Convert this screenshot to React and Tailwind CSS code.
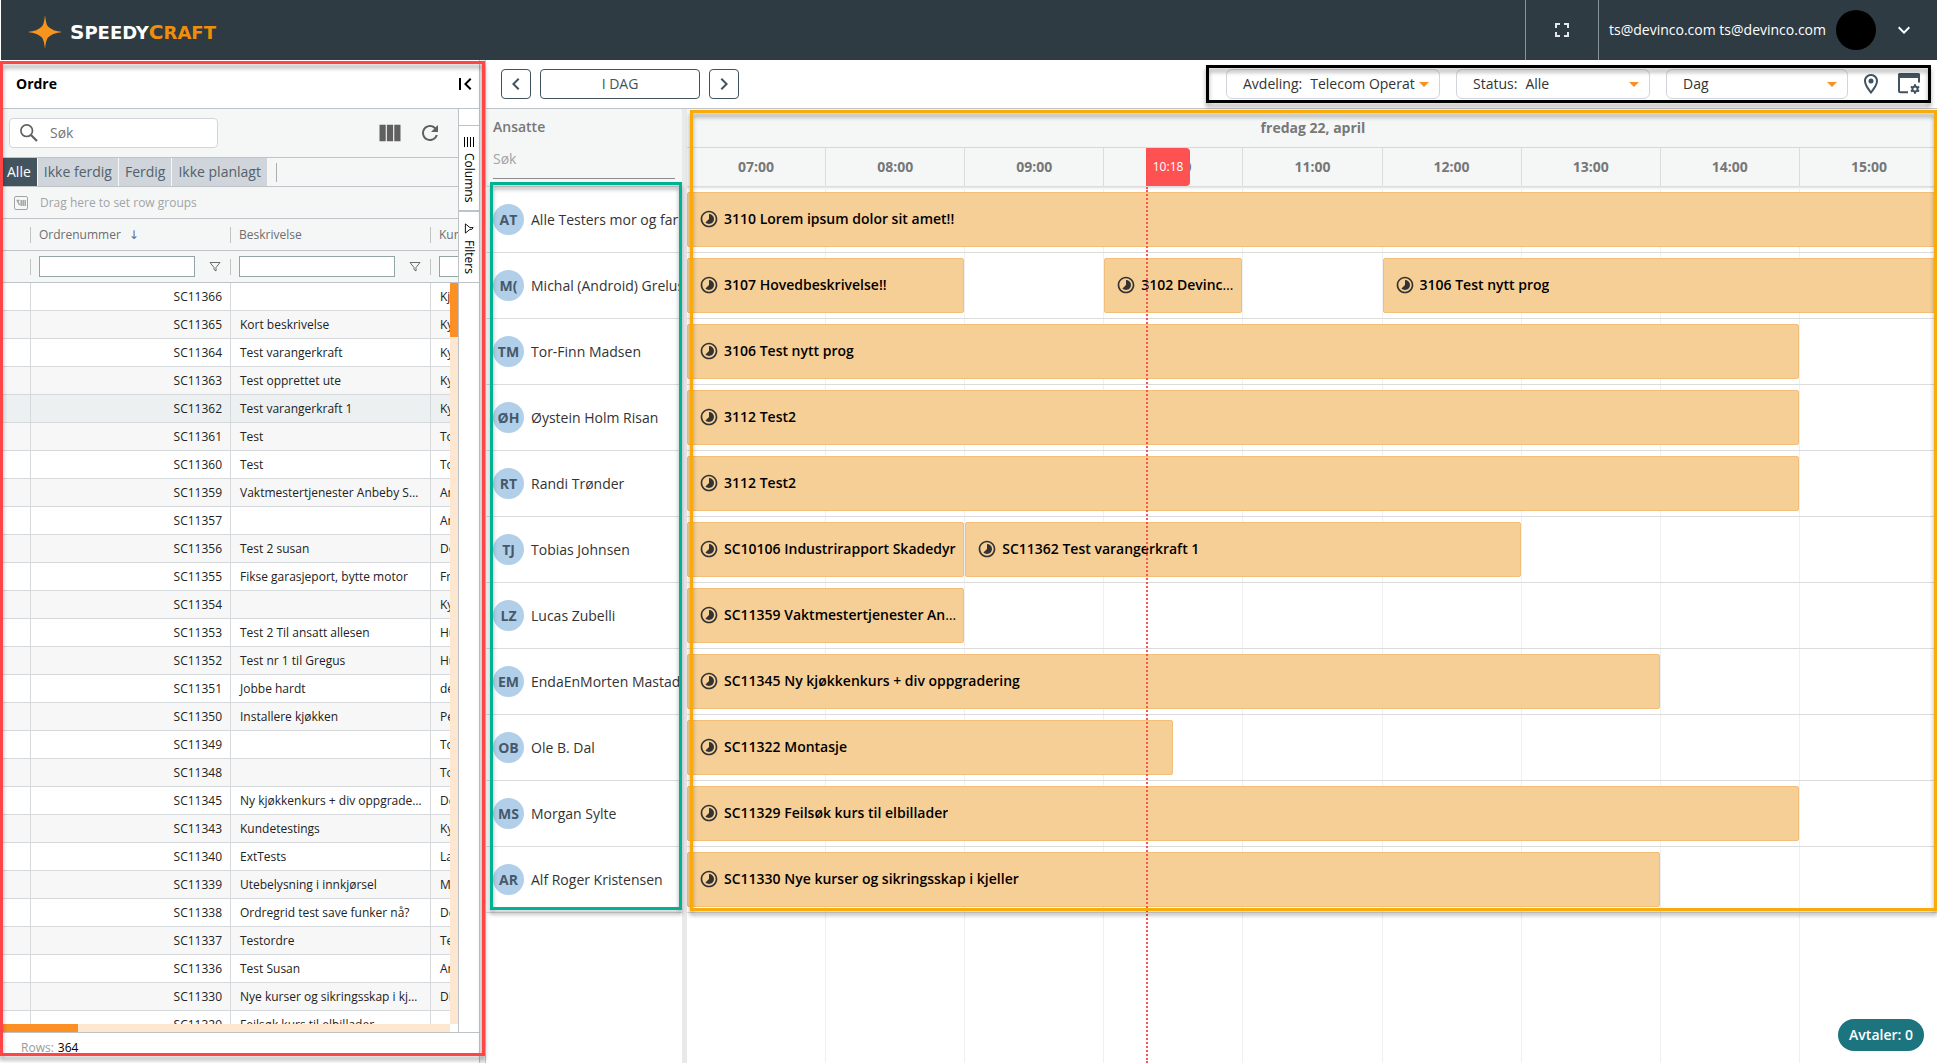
import React, { useState } from 'react';
import {
    MdChevronLeft,
    MdChevronRight,
    MdExpandMore,
    MdFirstPage,
    MdFullscreen,
    MdOutlineLocationOn,
    MdRefresh,
    MdTimelapse,
    MdViewColumn,
} from 'react-icons/md';

const START_HOUR = 7;
const HOURS = ['07:00', '08:00', '09:00', '10:00', '11:00', '12:00', '13:00', '14:00', '15:00'];

const ORDERS = [
    ['SC11366', '', 'Kjell'],
    ['SC11365', 'Kort beskrivelse', 'Kyrre'],
    ['SC11364', 'Test varangerkraft', 'Kyrre'],
    ['SC11363', 'Test opprettet ute', 'Kyrre'],
    ['SC11362', 'Test varangerkraft 1', 'Kyrre'],
    ['SC11361', 'Test', 'Tobias'],
    ['SC11360', 'Test', 'Tobias'],
    ['SC11359', 'Vaktmestertjenester Anbeby Sentrum', 'Anbeby'],
    ['SC11357', '', 'Anbeby'],
    ['SC11356', 'Test 2 susan', 'Devinco'],
    ['SC11355', 'Fikse garasjeport, bytte motor', 'Frank'],
    ['SC11354', '', 'Kyrre'],
    ['SC11353', 'Test 2 Til ansatt allesen', 'Hurum'],
    ['SC11352', 'Test nr 1 til Gregus', 'Hurum'],
    ['SC11351', 'Jobbe hardt', 'devinco'],
    ['SC11350', 'Installere kjøkken', 'Per'],
    ['SC11349', '', 'Tobias'],
    ['SC11348', '', 'Tobias'],
    ['SC11345', 'Ny kjøkkenkurs + div oppgradering', 'Devinco'],
    ['SC11343', 'Kundetestings', 'Kyrre'],
    ['SC11340', 'ExtTests', 'Lars'],
    ['SC11339', 'Utebelysning i innkjørsel', 'Morten'],
    ['SC11338', 'Ordregrid test save funker nå?', 'Devinco'],
    ['SC11337', 'Testordre', 'Test'],
    ['SC11336', 'Test Susan', 'Anbeby'],
    ['SC11330', 'Nye kurser og sikringsskap i kjeller', 'DI'],
    ['SC11329', 'Feilsøk kurs til elbillader', ''],
];

const EMPLOYEES = [
    { initials: 'AT', name: 'Alle Testers mor og far', events: [{ from: 7, to: 17, title: '3110 Lorem ipsum dolor sit amet!!' }] },
    {
        initials: 'M(',
        name: 'Michal (Android) Grelus',
        events: [
            { from: 7, to: 9, title: '3107 Hovedbeskrivelse!!' },
            { from: 10, to: 11, title: '3102 Devinco test' },
            { from: 12, to: 17, title: '3106 Test nytt prog' },
        ],
    },
    { initials: 'TM', name: 'Tor-Finn Madsen', events: [{ from: 7, to: 15, title: '3106 Test nytt prog' }] },
    { initials: 'ØH', name: 'Øystein Holm Risan', events: [{ from: 7, to: 15, title: '3112 Test2' }] },
    { initials: 'RT', name: 'Randi Trønder', events: [{ from: 7, to: 15, title: '3112 Test2' }] },
    {
        initials: 'TJ',
        name: 'Tobias Johnsen',
        events: [
            { from: 7, to: 9, title: 'SC10106 Industrirapport Skadedyr' },
            { from: 9, to: 13, title: 'SC11362 Test varangerkraft 1' },
        ],
    },
    { initials: 'LZ', name: 'Lucas Zubelli', events: [{ from: 7, to: 9, title: 'SC11359 Vaktmestertjenester Anbeby Sentrum' }] },
    { initials: 'EM', name: 'EndaEnMorten Mastad', events: [{ from: 7, to: 14, title: 'SC11345 Ny kjøkkenkurs + div oppgradering' }] },
    { initials: 'OB', name: 'Ole B. Dal', events: [{ from: 7, to: 10.5, title: 'SC11322 Montasje' }] },
    { initials: 'MS', name: 'Morgan Sylte', events: [{ from: 7, to: 15, title: 'SC11329 Feilsøk kurs til elbillader' }] },
    { initials: 'AR', name: 'Alf Roger Kristensen', events: [{ from: 7, to: 14, title: 'SC11330 Nye kurser og sikringsskap i kjeller' }] },
];

const TABS = ['Alle', 'Ikke ferdig', 'Ferdig', 'Ikke planlagt'];

const toPercent = (hour) => `${((hour - START_HOUR) / HOURS.length) * 100}%`;

// Coloured outline that marks a region of the planner
const Highlight = ({ className }) => (
    <div
        aria-hidden="true"
        className={`absolute z-30 border-3 pointer-events-none drop-shadow-[0_4px_2px_rgba(0,0,0,0.35)] ${className}`}
    />
);

const Logo = () => (
    <a href="#" className="flex items-center gap-2 pl-[27px] pt-1">
        <svg className="w-[34px] h-[34px]" viewBox="0 0 34 34" fill="#f7941e">
            <path d="M17 0C18 9 19 11 22 13C25 15 27 16 34 17C27 18 25 19 22 21C19 23 18 25 17 34C16 25 15 23 12 21C9 19 7 18 0 17C7 16 9 15 12 13C15 11 16 9 17 0Z" />
        </svg>
        <span className="font-['DejaVu_Sans'] font-bold text-lg text-white uppercase">
            <span className="text-xl">S</span>peedy
            <span className="text-[#ee8e0a]"><span className="text-xl">C</span>raft</span>
        </span>
    </a>
);

const SearchIcon = () => (
    <svg className="w-[18px] h-[18px]" viewBox="0 0 18 18" fill="none" stroke="currentColor" strokeWidth="1.7">
        <circle cx="6.7" cy="6.7" r="5.8" />
        <path d="M11 11L17 17" strokeWidth="2.2" />
    </svg>
);

const FilterIcon = ({ className }) => (
    <svg className={className} viewBox="0 0 12 12" fill="none" stroke="currentColor" strokeWidth="1">
        <path d="M1 1.5H11L7 6.5V10L5 8.5V6.5Z" />
    </svg>
);

const Caret = () => (
    <svg className="absolute right-2.5 top-3 w-[10px] h-[5px] pointer-events-none" viewBox="0 0 10 5" fill="#fb8f23">
        <path d="M0 0H10L5 5Z" />
    </svg>
);

const Dropdown = ({ id, label, value, className }) => (
    <div className={`relative flex items-center h-[30px] rounded-md border border-gray-300 bg-white pl-4 ${className}`}>
        <label htmlFor={id} className={label ? 'mr-2' : 'sr-only'}>{label || 'Visning'}</label>
        <select id={id} className="flex-1 min-w-0 h-full appearance-none bg-transparent outline-none">
            <option>{value}</option>
        </select>
        <Caret />
    </div>
);

const WindowSettingsIcon = () => (
    <svg className="w-[22px] h-[22px]" viewBox="0 0 22 22" fill="none" stroke="#41535e">
        <path d="M10 19.2H2.2Q1 19.2 1 18V2H21V9.5" strokeWidth="2" />
        <path d="M0 1.5Q0 0 1.5 0H20.5Q22 0 22 1.5V5H0Z" fill="#41535e" stroke="none" />
        <circle cx="17" cy="16" r="2.6" strokeWidth="2" />
        <path d="M17 11.3V13M17 19V20.7M12.9 13.6L14.4 14.5M19.6 17.5L21.1 18.4M12.9 18.4L14.4 17.5M19.6 14.5L21.1 13.6" strokeWidth="2" />
    </svg>
);

const Header = () => (
    <header className="flex h-[60px] shrink-0 ml-px bg-[#2f3b43] text-white">
        <Logo />
        <div className="flex-1" />
        <button aria-label="Fullskjerm" className="flex items-center justify-center w-[74px] border-x border-[#8b949a] text-gray-200">
            <MdFullscreen size={24} />
        </button>
        <button className="flex items-center pl-2.5 pr-[21px] font-medium">
            ts@devinco.com ts@devinco.com
            <span className="w-10 h-10 ml-2.5 mr-4 rounded-full bg-black" />
            <MdExpandMore size={24} stroke="currentColor" />
        </button>
    </header>
);

const OrderGrid = () => (
    <div className="relative flex-1 min-h-0 overflow-hidden">
        <table className="table-fixed w-[631px] border-separate border-spacing-0 text-xs">
            <colgroup>
                <col className="w-[31px]" />
                <col className="w-[200px]" />
                <col className="w-[200px]" />
                <col className="w-[200px]" />
            </colgroup>
            <thead className="bg-[#f5f7f7] text-[#6d6d6d]">
                <tr className="h-8 text-left">
                    {['', 'Ordrenummer', 'Beskrivelse', 'Kunde'].map((title, i) => (
                        <th key={i} className="relative border-b border-[#bdc3c7] px-2 font-normal">
                            {title}
                            {i === 1 && <span className="ml-2 font-['DejaVu_Sans']">↓</span>}
                            <span className="absolute right-0 top-2 h-4 border-r border-[#bdc3c7]" />
                        </th>
                    ))}
                </tr>
                <tr className="h-8">
                    {['', 'Ordrenummer', 'Beskrivelse', 'Kunde'].map((title, i) => (
                        <td key={i} className="relative border-b border-[#bdc3c7] px-2">
                            {title && (
                                <div className="flex items-center justify-between pr-0.5">
                                    <input aria-label={`${title} filter`} className="w-[156px] h-[21px] border border-[#95a5a6] bg-white outline-none" />
                                    <button aria-label={`Filtrer ${title}`}><FilterIcon className="w-3 h-3" /></button>
                                </div>
                            )}
                            <span className="absolute right-0 top-2 h-4 border-r border-[#bdc3c7]" />
                        </td>
                    ))}
                </tr>
            </thead>
            <tbody>
                {ORDERS.map(([number, description, customer]) => (
                    <tr
                        key={number}
                        className={`h-7 ${number === 'SC11362' ? 'bg-[#ecf0f1]!' : 'even:bg-[#f7f7f7]'}`}
                    >
                        <td className="border-r border-b border-[#d5d9dc]" />
                        <td className="border-r border-b border-[#d5d9dc] px-2 text-right">{number}</td>
                        <td className="border-r border-b border-[#d5d9dc] pl-[9px] pr-2 truncate">{description}</td>
                        <td className="border-r border-b border-[#d5d9dc] pl-[9px] pr-2 truncate">{customer}</td>
                    </tr>
                ))}
            </tbody>
        </table>
        {/* scrollbars */}
        <div className="absolute top-16 right-0 bottom-0 w-2 bg-[#fde7d0]">
            <div className="h-[54px] bg-[#fc9024]" />
        </div>
        <div className="absolute left-0 right-0 bottom-0 h-2 bg-white pr-2">
            <div className="h-2 bg-[#fde7d0]">
                <div className="h-2 w-[78px] bg-[#fc9024]" />
            </div>
        </div>
    </div>
);

const OrderPanel = () => {
    const [tab, setTab] = useState('Alle');

    return (
        <aside className="relative flex shrink-0 w-[486px] pr-[5px] border-r border-[#c4c8ca] bg-[#ededed]">
            <div className="flex flex-col flex-1 min-w-0 border-r border-[#bdc3c7] bg-white">
                <div className="flex items-center justify-between h-[49px] shrink-0 pl-4 pr-[2px] border-b border-[#bdc3c7]">
                    <h2 className="font-bold text-black">Ordre</h2>
                    <button aria-label="Skjul panel"><MdFirstPage size={24} className="text-black" /></button>
                </div>
                <div className="flex flex-1 min-h-0">
                    <div className="flex flex-col flex-1 min-w-0">
                        <div className="flex items-center h-[49px] shrink-0 pl-[9px] pr-4 border-b border-[#bdc3c7] bg-[#f5f7f7] text-[#606060]">
                            <label className="flex items-center w-[209px] h-[30px] rounded border border-[#ced6db] bg-white pl-2.5">
                                <SearchIcon />
                                <input placeholder="Søk" aria-label="Søk i ordre" className="flex-1 min-w-0 ml-3 outline-none placeholder:text-[#757575]" />
                            </label>
                            <button aria-label="Kolonner" className="ml-auto"><MdViewColumn size={28} /></button>
                            <button aria-label="Oppdater" className="ml-[14px]"><MdRefresh size={24} /></button>
                        </div>
                        <div className="flex items-center h-[29px] shrink-0 pl-[3px] border-b border-[#bdc3c7] bg-[#f5f7f7]">
                            {TABS.map((name) => (
                                <button
                                    key={name}
                                    onClick={() => setTab(name)}
                                    className={`h-full mr-px ${tab === name ? 'pl-1 pr-1.5 bg-[#44545f] text-white' : 'px-1.5 bg-[#cfd5da] text-[#52616b]'}`}
                                >
                                    {name}
                                </button>
                            ))}
                            <span className="ml-2 h-[19px] border-r border-[#a9b0b4]" />
                        </div>
                        <div className="flex items-center gap-3 h-8 shrink-0 pl-[14px] border-b border-[#bdc3c7] bg-[#f5f7f7] text-xs text-[#a3a3a3]">
                            <svg className="w-[14px] h-[14px]" viewBox="0 0 14 14" fill="none" stroke="currentColor">
                                <rect x="0.5" y="0.5" width="13" height="13" rx="1.5" />
                                <path d="M2.5 4.5H5.5M3.5 5L5.5 9M7.2 4V10M9.2 4V10M11.2 4V10" strokeWidth="1.5" />
                            </svg>
                            Drag here to set row groups
                        </div>
                        <OrderGrid />
                    </div>
                    <div className="flex flex-col w-[21px] shrink-0 border-l border-[#bdc3c7] text-xs">
                        <div className="h-[17px] border-b border-[#bdc3c7]" />
                        <button className="flex items-center gap-1.5 h-[86px] pt-[11px] border-b-2 border-[#bdc3c7] text-black [writing-mode:vertical-rl]">
                            <svg className="w-[11px] h-[10px]" viewBox="0 0 11 10" stroke="currentColor">
                                <path d="M0.5 0V10M3.5 0V10M6.5 0V10M9.5 0V10" />
                            </svg>
                            Columns
                        </button>
                        <button className="flex items-center gap-1.5 h-[71px] pt-[11px] border-b border-[#bdc3c7] text-black [writing-mode:vertical-rl]">
                            <FilterIcon className="w-[11px] h-[11px] -rotate-90" />
                            Filters
                        </button>
                    </div>
                </div>
                <div className="flex items-center gap-1 h-[31px] shrink-0 pl-[21px] border-t border-[#bdc3c7] text-xs">
                    <span className="text-[#9a9a9a]">Rows:</span>
                    <span className="font-medium text-black">364</span>
                </div>
            </div>
            <Highlight className="top-px left-0 right-0 bottom-[7px] border-[#ff4545]" />
        </aside>
    );
};

const Toolbar = () => (
    <div className="flex items-center h-[49px] shrink-0 pl-[15px] border-b border-[#bdc3c7] text-[#41535e]">
        <button aria-label="Forrige dag" className="flex items-center justify-center w-[30px] h-[30px] rounded border border-[#41535e]">
            <MdChevronLeft size={24} />
        </button>
        <button className="w-40 h-[30px] mx-[9px] rounded border border-[#41535e]">I DAG</button>
        <button aria-label="Neste dag" className="flex items-center justify-center w-[30px] h-[30px] rounded border border-[#41535e]">
            <MdChevronRight size={24} />
        </button>
        <div className="relative flex items-center ml-auto mr-1.5 h-[38px] pl-5 pr-[11px] text-[#333]">
            <Dropdown id="department" label="Avdeling:" value="Telecom Operat" className="w-[214px]" />
            <Dropdown id="status" label="Status:" value="Alle" className="w-[194px] ml-4" />
            <Dropdown id="view" value="Dag" className="w-[182px] ml-4" />
            <button aria-label="Kart" className="ml-[11px] text-[#41535e]"><MdOutlineLocationOn size={24} /></button>
            <button aria-label="Innstillinger" className="ml-[15px]"><WindowSettingsIcon /></button>
            <Highlight className="inset-0 border-black" />
        </div>
    </div>
);

const EmployeeColumn = () => (
    <div className="flex flex-col w-[196px] shrink-0">
        <div className="h-[78px] shrink-0 px-[7px] pt-2 border-b border-[#dcdcdc] bg-[#f5f7f7]">
            <div className="h-5 font-semibold leading-5 text-[#777]">Ansatte</div>
            <input
                placeholder="Søk"
                aria-label="Søk i ansatte"
                className="block w-full h-[34px] mt-2 pb-1.5 border-b border-[#8c8c8c] outline-none placeholder:text-[#a3a3a3]"
            />
        </div>
        <div className="relative">
            {EMPLOYEES.map(({ initials, name }) => (
                <div key={initials} className="flex items-center h-[66px] pl-[7px] border-b border-[#dcdcdc] overflow-hidden">
                    <span className="flex items-center justify-center w-[31px] h-[31px] shrink-0 rounded-full bg-[#b1cfe9] font-bold text-[#46596a]">
                        {initials}
                    </span>
                    <span className="ml-[7px] whitespace-nowrap text-[#333]">{name}</span>
                </div>
            ))}
            <Highlight className="-top-[5px] left-1 right-0 bottom-[3px] border-[#00b294]" />
        </div>
    </div>
);

const Timeline = () => (
    <div className="flex flex-1 min-w-0 overflow-hidden">
        <div className="relative flex flex-col flex-1 min-w-[1252px]">
            <div className="flex items-center justify-center h-[39px] shrink-0 border-b border-[#dcdcdc] bg-[#f5f7f7] font-bold text-[#777]">
                fredag 22, april
            </div>
            <div className="relative grid grid-cols-9 h-[39px] shrink-0 border-b border-[#dcdcdc] bg-[#f5f7f7] shadow-sm">
                {HOURS.map((hour) => (
                    <div key={hour} className="flex items-center justify-center border-r border-[#dcdcdc] font-bold text-[#777]">
                        {hour}
                    </div>
                ))}
                <div
                    className="absolute top-0 z-20 flex items-center justify-center w-11 h-[38px] rounded-r bg-[#fd5152] text-xs text-white"
                    style={{ left: toPercent(10.3) }}
                >
                    10:18
                </div>
            </div>
            <div className="relative flex-1">
                <div className="absolute inset-0 grid grid-cols-9">
                    {HOURS.map((hour) => (
                        <div key={hour} className="border-r border-[#f0f0f0]" />
                    ))}
                </div>
                {EMPLOYEES.map(({ initials, events }) => (
                    <div key={initials} className="relative h-[66px] border-b border-[#dcdcdc]">
                        {events.map((event) => (
                            <div
                                key={event.title}
                                className="absolute top-[5px] pr-px"
                                style={{ left: toPercent(event.from), width: toPercent(START_HOUR + event.to - event.from) }}
                            >
                                <div className="flex items-center h-[55px] pb-px pl-[11px] pr-1 rounded-xs border border-[#f3be78] bg-[#f6cf97]">
                                    <MdTimelapse size={20} className="shrink-0 text-[#333]" />
                                    <span className="ml-[5px] truncate text-black">
                                        <span className="font-semibold">{event.title}</span>
                                    </span>
                                </div>
                            </div>
                        ))}
                    </div>
                ))}
                <div
                    className="absolute inset-y-0 z-20 border-l-2 border-dotted border-[#fd5152]"
                    style={{ left: toPercent(10.3) }}
                />
            </div>
        </div>
    </div>
);

const App = () => (
    <div className="flex flex-col h-screen overflow-hidden bg-white font-['Open_Sans',sans-serif] text-sm text-[#222]">
        <Header />
        <div className="flex flex-1 min-h-0">
            <OrderPanel />
            <main className="relative flex flex-col flex-1 min-w-0">
                <Toolbar />
                <div className="relative flex flex-1 min-h-0">
                    <EmployeeColumn />
                    <div className="w-[5px] shrink-0 bg-[#e9e9e9]" />
                    <Timeline />
                    <Highlight className="top-px left-[204px] right-0 h-[801px] border-[#faab0c]" />
                </div>
                <button className="absolute right-[13px] bottom-3 z-20 h-8 px-[11px] rounded-full bg-[#1c747e] font-semibold text-white">
                    Avtaler: 0
                </button>
            </main>
        </div>
    </div>
);

export default App;
